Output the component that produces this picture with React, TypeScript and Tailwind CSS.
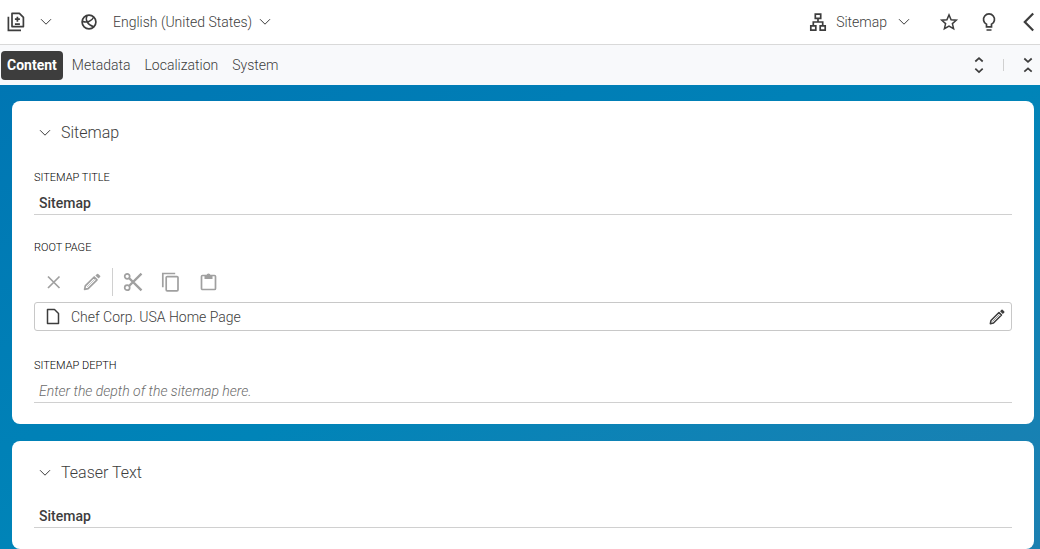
import type { ReactNode } from 'react'

type IconProps = { className?: string; children: ReactNode; box?: string }

function Icon({ className = 'h-5 w-5', box = '0 0 20 20', children }: IconProps) {
  return (
    <svg viewBox={box} fill="none" stroke="currentColor" strokeWidth="1.7" className={`shrink-0 ${className}`} aria-hidden="true">
      {children}
    </svg>
  )
}

function Chevron() {
  return (
    <Icon box="0 0 12 8" className="h-2 w-3">
      <path d="M1 1.2 6 6.2 11 1.2" strokeWidth="1" />
    </Icon>
  )
}

function PencilIcon({ className }: { className?: string }) {
  return (
    <Icon className={className}>
      <path d="M2.6 17.4 3.3 13.9 12.2 5 15 7.8 6.1 16.7Z" strokeLinejoin="round" />
      <path d="M5 15 12.8 7.2" strokeWidth="0.6" />
      <path d="M13.4 3.5 15 1.9Q15.6 1.4 16.2 1.9L18.1 3.8Q18.6 4.4 18.1 5L16.5 6.6Z" fill="currentColor" stroke="none" />
    </Icon>
  )
}

function SitemapIcon() {
  return (
    <Icon box="0 0 18 20" className="h-5 w-[18px]">
      <path d="M6.3 2.2h5.4v4.2H6.3zM1.8 13.8h5v4.4h-5zM11.2 13.8h5v4.4h-5zM9 6.2V10M4.3 13.8V10h9.4v3.8" />
    </Icon>
  )
}

function Section({ title, children }: { title: string; children: ReactNode }) {
  return (
    <section className="rounded-lg bg-white px-[22px] pt-5 pb-[21px]">
      <h2>
        <button type="button" aria-expanded="true" className="flex h-6 items-center gap-2.5 pl-[5px] text-base font-light">
          <Chevron />
          {title}
        </button>
      </h2>
      {children}
    </section>
  )
}

const labelClass = 'block text-[11px] leading-4 font-light uppercase text-black'
const inputClass =
  'block h-6 w-full border-b border-[#d0d0d0] px-[5px] text-sm font-medium outline-none placeholder:font-light placeholder:text-[#6b6b6b] placeholder:italic'

const tabs = ['Content', 'Metadata', 'Localization', 'System']

export default function App() {
  return (
    <div className="flex min-h-screen flex-col bg-white font-[Roboto,sans-serif] text-sm text-[#3d3d3d]">
      <header className="flex h-[45px] items-center justify-between border-b border-[#d9d9d9] pl-1.5">
        <div className="flex items-center">
          <button type="button" aria-label="Versions" className="flex items-center gap-3.5">
            <Icon className="h-5 w-5">
              <path d="M6 1.4h7.4l4 4v9.2H6z" strokeLinejoin="round" />
              <path d="M2.4 4.8v13.6H15M8.9 7.2h5M11.4 4.7v5M8.9 12.2h5" />
            </Icon>
            <Chevron />
          </button>
          <button type="button" className="ml-7 flex items-center gap-[15px] font-light">
            <Icon className="h-[18px] w-[18px]" box="0 0 18 18">
              <circle cx="9" cy="9" r="6.9" />
              <path d="M7 2.5C5 7 7.5 12 13.8 13.8M2.2 8.2C7 10.2 11.6 8.4 13.8 4" strokeWidth="1.5" />
            </Icon>
            English (United States)
            <span className="-ml-2 flex"><Chevron /></span>
          </button>
        </div>
        <div className="flex items-center">
          <button type="button" className="flex items-center gap-[9px] font-light">
            <SitemapIcon />
            Sitemap
            <span className="ml-0.5 flex"><Chevron /></span>
          </button>
          <button type="button" aria-label="Bookmark" className="ml-[29px]">
            <Icon className="h-5 w-5">
              <path d="M10 2.9 12.1 7.7 17.3 8.2 13.4 11.6 14.6 16.7 10 14 5.4 16.7 6.6 11.6 2.7 8.2 7.9 7.7Z" strokeWidth="1.5" />
            </Icon>
          </button>
          <button type="button" aria-label="Hints" className="ml-5">
            <Icon className="h-5 w-5">
              <path d="M7.5 14.8V12.3A5.5 5.5 0 1 1 12.5 12.3V14.8ZM7.5 18h5" />
            </Icon>
          </button>
          <button type="button" aria-label="Show side panel" className="mr-px ml-5">
            <Icon className="h-5 w-5">
              <path d="M14.2 1.5 5.8 10 14.2 18.5" strokeWidth="2.2" />
            </Icon>
          </button>
        </div>
      </header>

      <nav className="flex h-10 items-center justify-between bg-[#f8f9fb] pr-0.5 pl-px">
        <div role="tablist" className="flex items-center">
          {tabs.map((tab, i) => (
            <button
              key={tab}
              type="button"
              role="tab"
              aria-selected={i === 0}
              className={i === 0 ? 'mr-0.5 h-[29px] rounded bg-[#3d3d3d] px-1.5 font-bold text-white' : 'h-[29px] px-[7px] font-light'}
            >
              {tab}
            </button>
          ))}
        </div>
        <div className="flex items-center">
          <button type="button" aria-label="Expand all">
            <Icon className="h-5 w-5">
              <path d="M6.3 6.5 10 3.1 13.7 6.5M6.3 13.7 10 17.1 13.7 13.7" />
            </Icon>
          </button>
          <span className="mx-3.5 h-3 w-px bg-[#d0d0d0]" />
          <button type="button" aria-label="Collapse all">
            <Icon className="h-5 w-5">
              <path d="M6.3 3.5 10 6.9 13.7 3.5M6.3 16.7 10 13.3 13.7 16.7" />
            </Icon>
          </button>
        </div>
      </nav>

      <main className="flex grow flex-col gap-[17px] bg-linear-to-br from-[#0076b3] via-[#0084b8] to-[#1c80b1] pt-4 pr-1.5 pl-3">
        <Section title="Sitemap">
          <label htmlFor="title" className={`mt-[25px] ${labelClass}`}>Sitemap Title</label>
          <input id="title" defaultValue="Sitemap" className={`mt-[5px] ${inputClass}`} />

          <h3 className={`mt-[25px] ${labelClass}`}>Root Page</h3>
          <div className="mt-3 flex h-7 items-center pl-2.5 text-[#a0a0a0]">
            <button type="button" aria-label="Remove">
              <Icon className="h-5 w-5"><path d="M4 4.5 15.5 16M15.5 4.5 4 16" /></Icon>
            </button>
            <button type="button" aria-label="Edit" className="ml-[18px]">
              <PencilIcon className="h-5 w-5" />
            </button>
            <span className="mx-2.5 h-7 w-px bg-[#d0d0d0]" />
            <button type="button" aria-label="Cut">
              <Icon className="h-5 w-5">
                <circle cx="4.2" cy="4.3" r="2.5" />
                <circle cx="4.2" cy="15.7" r="2.5" />
                <path d="M6 6 18.5 18.3M6 14 18.5 1.7" strokeWidth="2.4" />
              </Icon>
            </button>
            <button type="button" aria-label="Copy" className="ml-[18px]">
              <Icon className="h-5 w-5">
                <rect x="5.2" y="4.6" width="11.8" height="14.2" rx="1" />
                <path d="M1.8 15.2V1.5H14.2" />
              </Icon>
            </button>
            <button type="button" aria-label="Paste" className="ml-[18px]">
              <Icon className="h-5 w-5">
                <rect x="2.5" y="3.5" width="14" height="14" rx="1" />
                <path d="M5.5 3.3h2.1a1.9 1.9 0 0 1 3.8 0h2.1V7h-8z" fill="currentColor" stroke="none" />
              </Icon>
            </button>
          </div>
          <div className="mt-1.5 flex h-[29px] items-center rounded-[3px] border border-[#c8c8c8] pr-1 pl-2.5">
            <Icon box="0 0 16 18" className="mr-2.5 h-[18px] w-4">
              <path d="M2.5 1.5H9.5L13.5 5.5V15.5H2.5Z" strokeWidth="1.5" strokeLinejoin="round" />
            </Icon>
            <span className="grow font-light">Chef Corp. USA Home Page</span>
            <button type="button" aria-label="Edit Chef Corp. USA Home Page" className="px-px">
              <PencilIcon className="h-[18px] w-[18px]" />
            </button>
          </div>

          <label htmlFor="depth" className={`mt-[27px] ${labelClass}`}>Sitemap Depth</label>
          <input id="depth" placeholder="Enter the depth of the sitemap here." className={`mt-[5px] ${inputClass}`} />
        </Section>

        <Section title="Teaser Text">
          <input aria-label="Teaser Text" defaultValue="Sitemap" className={`mt-[19px] ${inputClass}`} />
        </Section>
      </main>
    </div>
  )
}
